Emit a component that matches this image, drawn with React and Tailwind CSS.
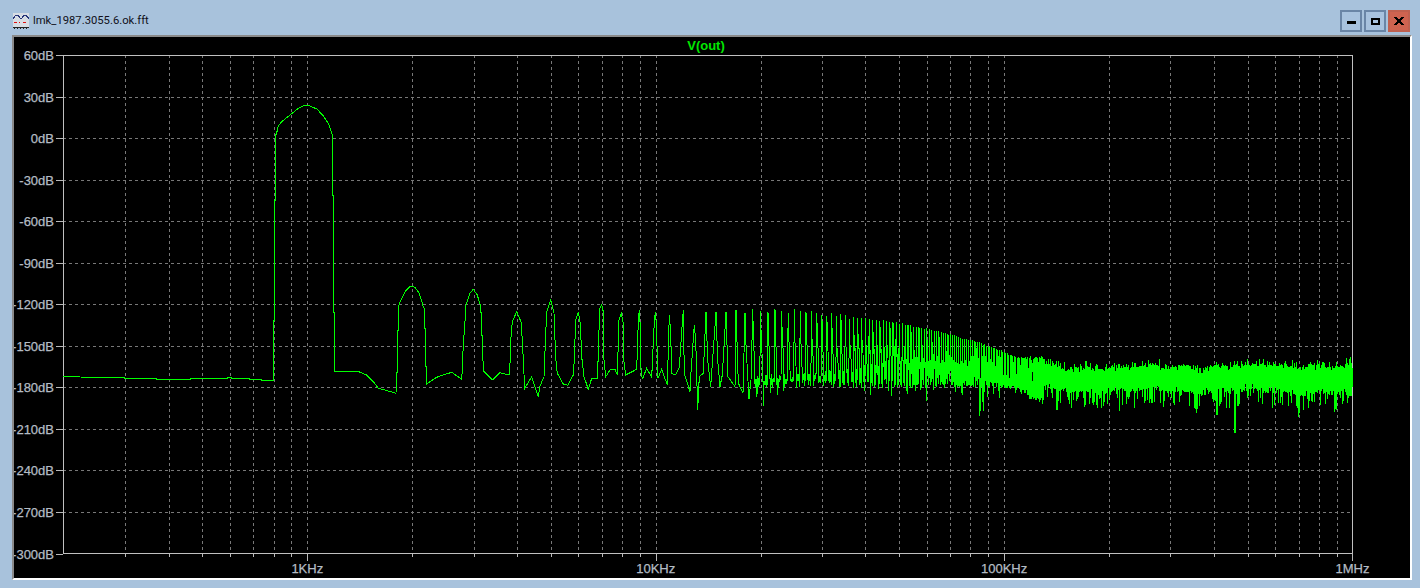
const PL = 63;
const PR = 1352.5;
const PT = 55;
const PB = 553.5;
const DEC = 348.4;
const X1K = 307.3;

const dbLabels = ["60dB", "30dB", "0dB", "-30dB", "-60dB", "-90dB", "-120dB", "-150dB", "-180dB", "-210dB", "-240dB", "-270dB", "-300dB"];
const freqLabels = ["1KHz", "10KHz", "100KHz", "1MHz"];
const fx = (f) => X1K + DEC * Math.log10(f);

// minor and major frequency lines, 200Hz to 1MHz, in KHz
const freqLines = [];
for (const decade of [0.1, 1, 10, 100]) {
  for (let n = 1; n <= 9; n++) {
    const f = n * decade;
    if (f > 0.2 && f < 1000) freqLines.push(f);
  }
}

// hand-read part of the trace, up to about 17KHz
const head = [
  [63, 376], [79, 376], [79, 377], [124, 377.3], [124, 378], [156, 378], [156, 379], [190, 379], [190, 378], [227, 378], [227, 377], [231, 377], [231, 378], [249, 378], [249, 379], [261, 379], [261, 380.3], [273, 380.3], [273, 320], [274, 320], [274, 200], [275, 200], [275, 137],
  [276.7, 133], [278, 126.7], [281.7, 121.7], [290, 115], [298.3, 108.3], [303.3, 105.7], [307.3, 105], [311.7, 106.7], [317.3, 109.3], [323.3, 116], [328.3, 123.3], [331.7, 133.3], [332.7, 136.7],
  [332.7, 195], [333.7, 195], [333.7, 312.7], [334.7, 312.7], [334.7, 371.7], [358.7, 371.7], [366.7, 375], [373.3, 381.7], [378.3, 388.3], [388.3, 391], [396, 393.3],
  [396.3, 372.3], [397.3, 372.3], [397.3, 330], [398.3, 330], [398.3, 306.7], [400, 301.7], [405, 291.7], [409, 287.3], [411.7, 286], [415, 287.3], [419.3, 293.3], [423.3, 306.7], [424, 308], [424.7, 328.3], [425.7, 328.3], [425.7, 366], [426.3, 366], [426.7, 384.3],
  [430, 381.7], [436.7, 377.3], [443.3, 375], [451.7, 372.3], [461.7, 379.3], [462.3, 368.3], [463.3, 344], [465, 321.7], [466, 305], [470, 293.3], [473.3, 289.3], [477.3, 295], [480.7, 306.7], [481.7, 325], [482.7, 357.3], [484, 371.7], [492.3, 380], [500, 372.7], [509, 375], [510, 363.3], [511, 337.3], [512.3, 321.7], [516.7, 311.7], [521, 321.7], [522.3, 340], [524.7, 388.3], [531.7, 376.7], [538.3, 396.7], [540, 386], [544, 376.7], [545.3, 343.3], [546.7, 311.7], [550.7, 300], [554, 313.3], [555.7, 358.3], [557.3, 373.3], [563.3, 384], [567.7, 385.3], [573.3, 375], [574.3, 360], [575.7, 320], [578.3, 311.7], [580.3, 323.3], [581.7, 356.7], [584, 376.7], [588.3, 389.3], [591.7, 378.3], [597.7, 378.3], [598.3, 346], [600, 308.3], [601.7, 305], [603.3, 311.7], [604, 360], [605.7, 376.7], [610, 370], [615, 369.3], [617.3, 375], [619, 320], [621.3, 313.3], [623.3, 323.3], [624, 361.7], [625.7, 375], [636.7, 369.3], [638.3, 321.7], [639.3, 310], [640, 321.7], [641, 368], [642.3, 379.3], [646.7, 368.3], [651.7, 377.3], [654.3, 321.7], [655.3, 311.7], [656.3, 323], [658, 378.3], [661.7, 369.3], [667.3, 385], [669.3, 315], [670.7, 333], [671.7, 373.3], [675.7, 375], [679.3, 367.3], [682.3, 323], [683.3, 310], [684.3, 373.3], [690, 391.7], [690.7, 376.7], [694.3, 325], [695.7, 340], [697.7, 410], [699.3, 376.7], [703.3, 373.3], [706, 311.7], [707.7, 360], [710.7, 386.7], [716, 311.7], [717.7, 360], [720, 386.7], [722.3, 375], [726, 311.7], [728, 376.7], [735, 386.7], [736, 310], [738.3, 383], [743, 393], [745, 313], [746, 345], [749, 399], [751, 380],
];

// top of the harmonic comb, read off by x
const envelope = [[738, 312], [745, 313], [752, 308], [767, 307], [782, 308], [816, 310], [837, 313], [853, 316], [873, 319], [897, 322], [920, 327], [940, 331], [960, 337], [980, 342], [1000, 350], [1020, 358], [1040, 368], [1060, 368]];
const lerp = (pts, x) => {
  for (let i = 1; i < pts.length; i++) {
    if (x <= pts[i][0]) {
      const [x0, y0] = pts[i - 1];
      const [x1, y1] = pts[i];
      return y0 + ((y1 - y0) * (x - x0)) / (x1 - x0);
    }
  }
  return pts[pts.length - 1][1];
};

function buildTrace() {
  let seed = 19871;
  const rnd = () => {
    seed = (seed * 16807) % 2147483647;
    return seed / 2147483647;
  };
  const pts = head.slice();

  // harmonics at every 1KHz, closing up towards 100KHz
  for (let n = 19; n < 130; n++) {
    const x = fx(n);
    const gap = fx(n + 1) - x;
    const dense = Math.min(1, Math.max(0, (x - 790) / 130));
    const env = lerp(envelope, x);
    pts.push([x, env + (x < 850 ? rnd() * 5 : rnd() * 1.5)]);
    pts.push([x + 0.6, env + 30 + rnd() * 6]);
    if (gap > 3) pts.push([x + 1.4, 345 + rnd() * 14]);
    const steps = gap > 3 ? 4 + Math.round(rnd() * 2) : 6;
    for (let s = 1; s <= steps; s++) {
      const px = x + 1.4 + ((gap - 1.4) * s) / (steps + 1);
      const top = 374 - dense * 18 + rnd() * 7;
      const bottom = 379 + rnd() * 9 + (rnd() < 0.16 ? rnd() * 15 : 0);
      pts.push([px, s % 2 ? bottom : top]);
    }
  }

  // spikes that stick out of the floor, read off by hand
  const spikes = { 763: 406, 980: 416, 983: 411, 1057: 410, 1119: 411, 1134: 408, 1197: 413, 1217: 415, 1235: 432.7, 1299: 417, 1335: 412 };
  for (const key of Object.keys(spikes).slice(0, 3)) {
    const x = Number(key);
    const at = pts.findIndex(([px]) => px > x);
    pts.splice(at, 0, [x, spikes[key]]);
  }

  // noise floor up to 1MHz, a bit lumpy and widening to the right
  const start = pts[pts.length - 1][0];
  for (let x = start; x < PR; x += 0.34) {
    const col = Math.round(x);
    const lump = 1.5 * Math.sin(x / 17) + 1.5 * Math.sin(x / 5.3 + 1);
    const widen = ((x - 1050) / 300) * 2;
    const up = rnd();
    const low = rnd();
    const topY = (up < 0.08 ? 361 + rnd() * 5 : 366 + rnd() * 8) + lump - widen;
    const lowY = (low < 0.13 ? 394 + rnd() * 13 : 383 + rnd() * 9) + lump + widen;
    pts.push([x, topY]);
    pts.push([x + 0.17, spikes[col] && low < 0.5 ? spikes[col] : lowY]);
  }
  pts.push([PR, 377]);
  return pts.map(([x, y]) => `${x.toFixed(1)},${y.toFixed(1)}`).join(" ");
}

const trace = buildTrace();

function Chart() {
  return (
    <svg width="1400" height="545" viewBox="12 35 1400 545" className="block" shapeRendering="crispEdges" style={{ fontFamily: '"Liberation Sans", Arial, sans-serif' }}>
      <text x="706" y="50" textAnchor="middle" fontSize="13" fill="#00e800" fontWeight="bold">V(out)</text>

      {dbLabels.map((label, i) => {
        const y = Math.round(PT + (i * (PB - PT)) / 12) + 0.5;
        return (
          <g key={label}>
            {i > 0 && i < 12 && <line x1={PL} x2={PR} y1={y} y2={y} stroke="#787878" strokeDasharray="3 3" />}
            <line x1="56" x2={PL} y1={y} y2={y} stroke="#b8b8b8" />
            <text x="54" y={y + 4.5} textAnchor="end" fontSize="13" fill="#b4bcc4" stroke="#b4bcc4" strokeWidth="0.25">{label}</text>
          </g>
        );
      })}

      {freqLines.map((f) => {
        const x = Math.round(fx(f)) + 0.5;
        const major = [1, 10, 100].includes(f);
        return (
          <g key={f}>
            <line x1={x} x2={x} y1={PT} y2={PB} stroke="#787878" strokeDasharray="3 3" />
            <line x1={x} x2={x} y1={PB} y2={major ? 561 : 557} stroke="#b8b8b8" />
          </g>
        );
      })}

      <rect x="63.5" y="55.5" width="1289" height="498" fill="none" stroke="#c0c0c0" />
      <line x1="1352.5" x2="1352.5" y1="553" y2="561" stroke="#b8b8b8" />

      <polyline points={trace} fill="none" stroke="#00ff00" strokeWidth="1" />

      {freqLabels.map((label, i) => (
        <text key={label} x={X1K + i * DEC} y="573" textAnchor="middle" fontSize="13" fill="#b4bcc4" stroke="#b4bcc4" strokeWidth="0.25">{label}</text>
      ))}
    </svg>
  );
}

function WinButton({ children, close }) {
  return (
    <div className={`w-[22px] h-[22px] flex items-center justify-center border-2 ${close ? "bg-[#cf6350] border-[#c0604f]" : "bg-[#a8c2de] border-[#6a85a6]"}`}>
      {children}
    </div>
  );
}

function AppIcon() {
  return (
    <svg width="16" height="16" viewBox="0 0 16 16" shapeRendering="crispEdges">
      <rect x="0" y="0" width="16" height="14" fill="#d8dde4" />
      <path d="M0 6 L3 2 L5 2 L7 5 L9 5 L11 2 L13 2 L16 6" fill="none" stroke="#27367a" />
      <path d="M1 9h3M6 9h1M10 9h3" stroke="#e01010" />
      <path d="M0 14h16" stroke="#222" />
      <path d="M1 15h1M4 15h1M7 15h1M10 15h1M13 15h1" stroke="#222" />
    </svg>
  );
}

export default function App() {
  return (
    <div className="w-[1420px] h-[588px] bg-[#a8c2dc] overflow-hidden flex flex-col">
      <div className="h-[35px] pt-[7px] pl-[13px] pr-[10px] flex items-center">
        <AppIcon />
        <span className="ml-[4px] text-[11.25px] text-[#10101a] font-['Roboto',sans-serif]">lmk_1987.3055.6.ok.fft</span>
        <div className="ml-auto flex gap-[2px]">
          <WinButton><div className="w-[9px] h-[3px] bg-black mt-[3px]" /></WinButton>
          <WinButton><div className="w-[9px] h-[7px] border-2 border-black" /></WinButton>
          <WinButton close>
            <svg width="10" height="8" viewBox="0 0 10 8" shapeRendering="crispEdges">
              <path d="M0 0h3v1h1v1h2v-1h1v-1h3v1h-1v1h-1v1h-1v2h1v1h1v1h1v1h-3v-1h-1v-1h-2v1h-1v1h-3v-1h1v-1h1v-1h1v-2h-1v-1h-1v-1h-1z" fill="#000" />
            </svg>
          </WinButton>
        </div>
      </div>
      <div className="ml-[12px] w-[1400px] h-[545px] bg-black border-t-2 border-l-2 border-t-[#8a8a8a] border-l-[#8a8a8a] border-r-2 border-b-2 border-r-white border-b-white overflow-hidden box-border">
        <div className="-mt-[2px] -ml-[2px]">
          <Chart />
        </div>
      </div>
    </div>
  );
}
